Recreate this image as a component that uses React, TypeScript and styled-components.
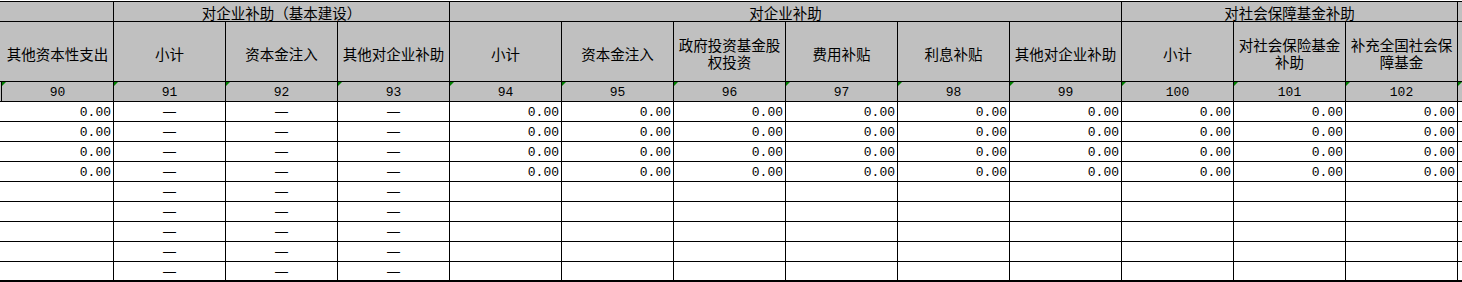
import React from "react";
import styled, { createGlobalStyle } from "styled-components";

const GlobalStyle = createGlobalStyle`
  html, body {
    margin: 0;
    padding: 0;
    background: #ffffff;
    overflow: hidden;
  }
`;

const Viewport = styled.div`
  width: 1462px;
  height: 282px;
  overflow: hidden;
  padding-top: 1px;
  box-sizing: border-box;
  background: #ffffff;
`;

const Sheet = styled.div`
  display: grid;
  grid-template-columns: 1px repeat(14, 111px);
  grid-template-rows: 19px 59px 19px repeat(8, 19px) 18px;
  gap: 1px;
  padding: 1px 0 2px;
  width: max-content;
  background: #000000;
`;

const cjk = `"Noto Sans CJK SC", "Noto Sans", sans-serif`;
const mono = `"Liberation Mono", "DejaVu Sans Mono", monospace`;
const dashFont = `"Liberation Sans", "Noto Sans CJK SC", sans-serif`;

const GroupHead = styled.div<{ $span: number }>`
  grid-column: span ${({ $span }) => $span};
  background: #c0c0c0;
  display: flex;
  align-items: center;
  justify-content: center;
  font-family: ${cjk};
  font-size: 14.5px;
  line-height: 17px;
  color: #000000;
  padding-top: 2px;
  white-space: nowrap;
`;

const ColHead = styled.div`
  background: #c0c0c0;
  display: flex;
  align-items: center;
  justify-content: center;
  text-align: center;
  font-family: ${cjk};
  font-size: 14.5px;
  line-height: 17px;
  color: #000000;
  padding: 3px 2px 0;
  word-break: break-all;
`;

const IndexCell = styled.div<{ $mark?: boolean }>`
  position: relative;
  background: #c0c0c0;
  display: flex;
  align-items: center;
  justify-content: center;
  font-family: ${mono};
  font-size: 13px;
  color: #000000;
  padding-top: 2px;

  &::before {
    content: "";
    display: ${({ $mark }) => ($mark ? "block" : "none")};
    position: absolute;
    left: 0;
    top: 0;
    border-top: 4px solid #008000;
    border-right: 4px solid transparent;
  }
`;

const DataCell = styled.div<{ $dash?: boolean }>`
  background: #ffffff;
  display: flex;
  align-items: center;
  justify-content: ${({ $dash }) => ($dash ? "center" : "flex-end")};
  padding: ${({ $dash }) => ($dash ? "0" : "2px 2px 0 0")};
  font-family: ${({ $dash }) => ($dash ? dashFont : mono)};
  font-size: ${({ $dash }) => ($dash ? "13px" : "13px")};
  color: #000000;
  white-space: nowrap;
`;

const columns = [
  { no: 90, title: "其他资本性支出" },
  { no: 91, title: "小计", dash: true },
  { no: 92, title: "资本金注入", dash: true },
  { no: 93, title: "其他对企业补助", dash: true },
  { no: 94, title: "小计" },
  { no: 95, title: "资本金注入" },
  { no: 96, title: "政府投资基金股权投资" },
  { no: 97, title: "费用补贴" },
  { no: 98, title: "利息补贴" },
  { no: 99, title: "其他对企业补助" },
  { no: 100, title: "小计" },
  { no: 101, title: "对社会保险基金补助" },
  { no: 102, title: "补充全国社会保障基金" },
];

const rowCount = 9;
const filledRows = 4;

export default function App() {
  return (
    <>
      <GlobalStyle />
      <Viewport>
        <Sheet>
          <GroupHead $span={2} />
          <GroupHead $span={3}>对企业补助（基本建设）</GroupHead>
          <GroupHead $span={6}>对企业补助</GroupHead>
          <GroupHead $span={3}>对社会保障基金补助</GroupHead>
          <GroupHead $span={1} />

          <ColHead />
          {columns.map((c) => (
            <ColHead key={c.no}>{c.title}</ColHead>
          ))}
          <ColHead />

          <IndexCell />
          {columns.map((c) => (
            <IndexCell key={c.no} $mark>
              {c.no}
            </IndexCell>
          ))}
          <IndexCell $mark />

          {Array.from({ length: rowCount }).map((_, r) => (
            <React.Fragment key={r}>
              <DataCell />
              {columns.map((c) => (
                <DataCell key={c.no} $dash={c.dash}>
                  {c.dash ? "—" : r < filledRows ? "0.00" : ""}
                </DataCell>
              ))}
              <DataCell />
            </React.Fragment>
          ))}
        </Sheet>
      </Viewport>
    </>
  );
}
